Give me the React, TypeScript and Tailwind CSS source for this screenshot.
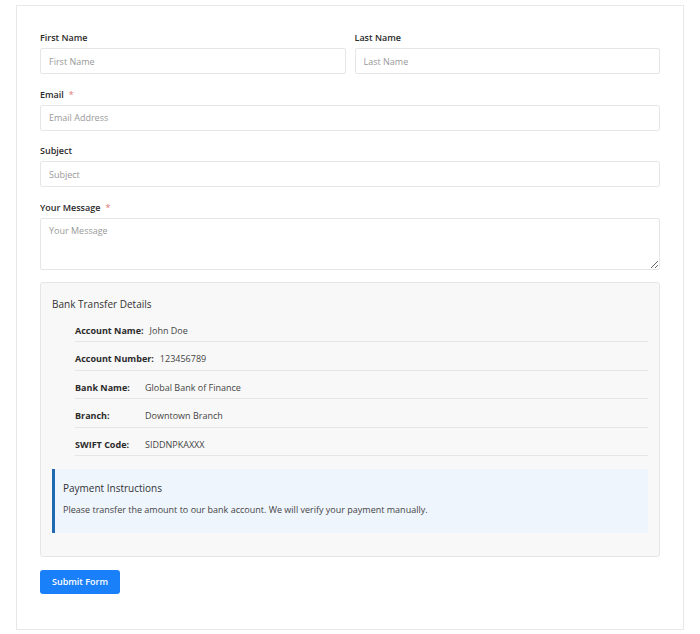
import React from "react";

const font = { fontFamily: '"Open Sans", "Noto Sans", sans-serif' };

function Label({ text, required }: { text: string; required?: boolean }) {
  return (
    <label className="block text-[9px] font-semibold leading-[16px] text-[#2b2b2b] mb-[2px]">
      {text}
      {required && <span className="ml-[5px] font-normal text-[#e57373]">*</span>}
    </label>
  );
}

function Input({ placeholder }: { placeholder: string }) {
  return (
    <input
      placeholder={placeholder}
      className="block w-full h-[26px] px-[8px] border border-[#e6e6e6] rounded-[2px] bg-white text-[9px] text-[#333] placeholder:text-[#999] outline-none"
    />
  );
}

const rows: [string, string][] = [
  ["Account Name:", "John Doe"],
  ["Account Number:", "123456789"],
  ["Bank Name:", "Global Bank of Finance"],
  ["Branch:", "Downtown Branch"],
  ["SWIFT Code:", "SIDDNPKAXXX"],
];

export default function App() {
  return (
    <div className="bg-white min-h-[634px] pt-[5px]" style={font}>
      <div className="mx-auto w-[668px] h-[625px] border border-[#e8e8e8] bg-white px-[23px] pt-[24px]">
        <div className="grid grid-cols-2 gap-x-[9px]">
          <div>
            <Label text="First Name" />
            <Input placeholder="First Name" />
          </div>
          <div>
            <Label text="Last Name" />
            <Input placeholder="Last Name" />
          </div>
        </div>
        <div className="mt-[12.5px]">
          <Label text="Email" required />
          <Input placeholder="Email Address" />
        </div>
        <div className="mt-[12.5px]">
          <Label text="Subject" />
          <Input placeholder="Subject" />
        </div>
        <div className="mt-[12.5px]">
          <Label text="Your Message" required />
          <textarea
            placeholder="Your Message"
            className="block w-full h-[52px] px-[8px] py-[5px] border border-[#e6e6e6] rounded-[2px] bg-white text-[9px] leading-[14px] text-[#333] placeholder:text-[#999] outline-none"
          />
        </div>

        <div className="mt-[12px] border border-[#e6e6e6] rounded-[3px] bg-[#f8f8f8] px-[11px] pt-[11px] pb-[11px]">
          <div className="text-[10px] font-medium leading-[20px] text-[#333]">Bank Transfer Details</div>
          <ul className="pl-[23px]">
            {rows.map(([k, v]) => (
              <li
                key={k}
                className="flex items-center pt-[10px] pb-[3.5px] leading-[14px] border-b border-[#e6e6e6] text-[9px]"
              >
                <span className="font-bold text-[#2b2b2b] min-w-[64px] mr-[6px]">{k}</span>
                <span className="text-[#444]">{v}</span>
              </li>
            ))}
          </ul>
          <div className="mt-[13px] mb-[12px] border-l-[3px] border-[#2069b3] bg-[#eef5fd] pl-[8px] pr-[10px] pt-[11px] pb-[16px]">
            <div className="text-[10px] font-medium leading-[16px] text-[#333] mb-[7px]">Payment Instructions</div>
            <div className="text-[9px] leading-[14px] text-[#444]">
              Please transfer the amount to our bank account. We will verify your payment manually.
            </div>
          </div>
        </div>

        <button className="mt-[13px] h-[24px] px-[12px] rounded-[3px] bg-[#1a80fa] text-white text-[9px] font-semibold">
          Submit Form
        </button>
      </div>
    </div>
  );
}
